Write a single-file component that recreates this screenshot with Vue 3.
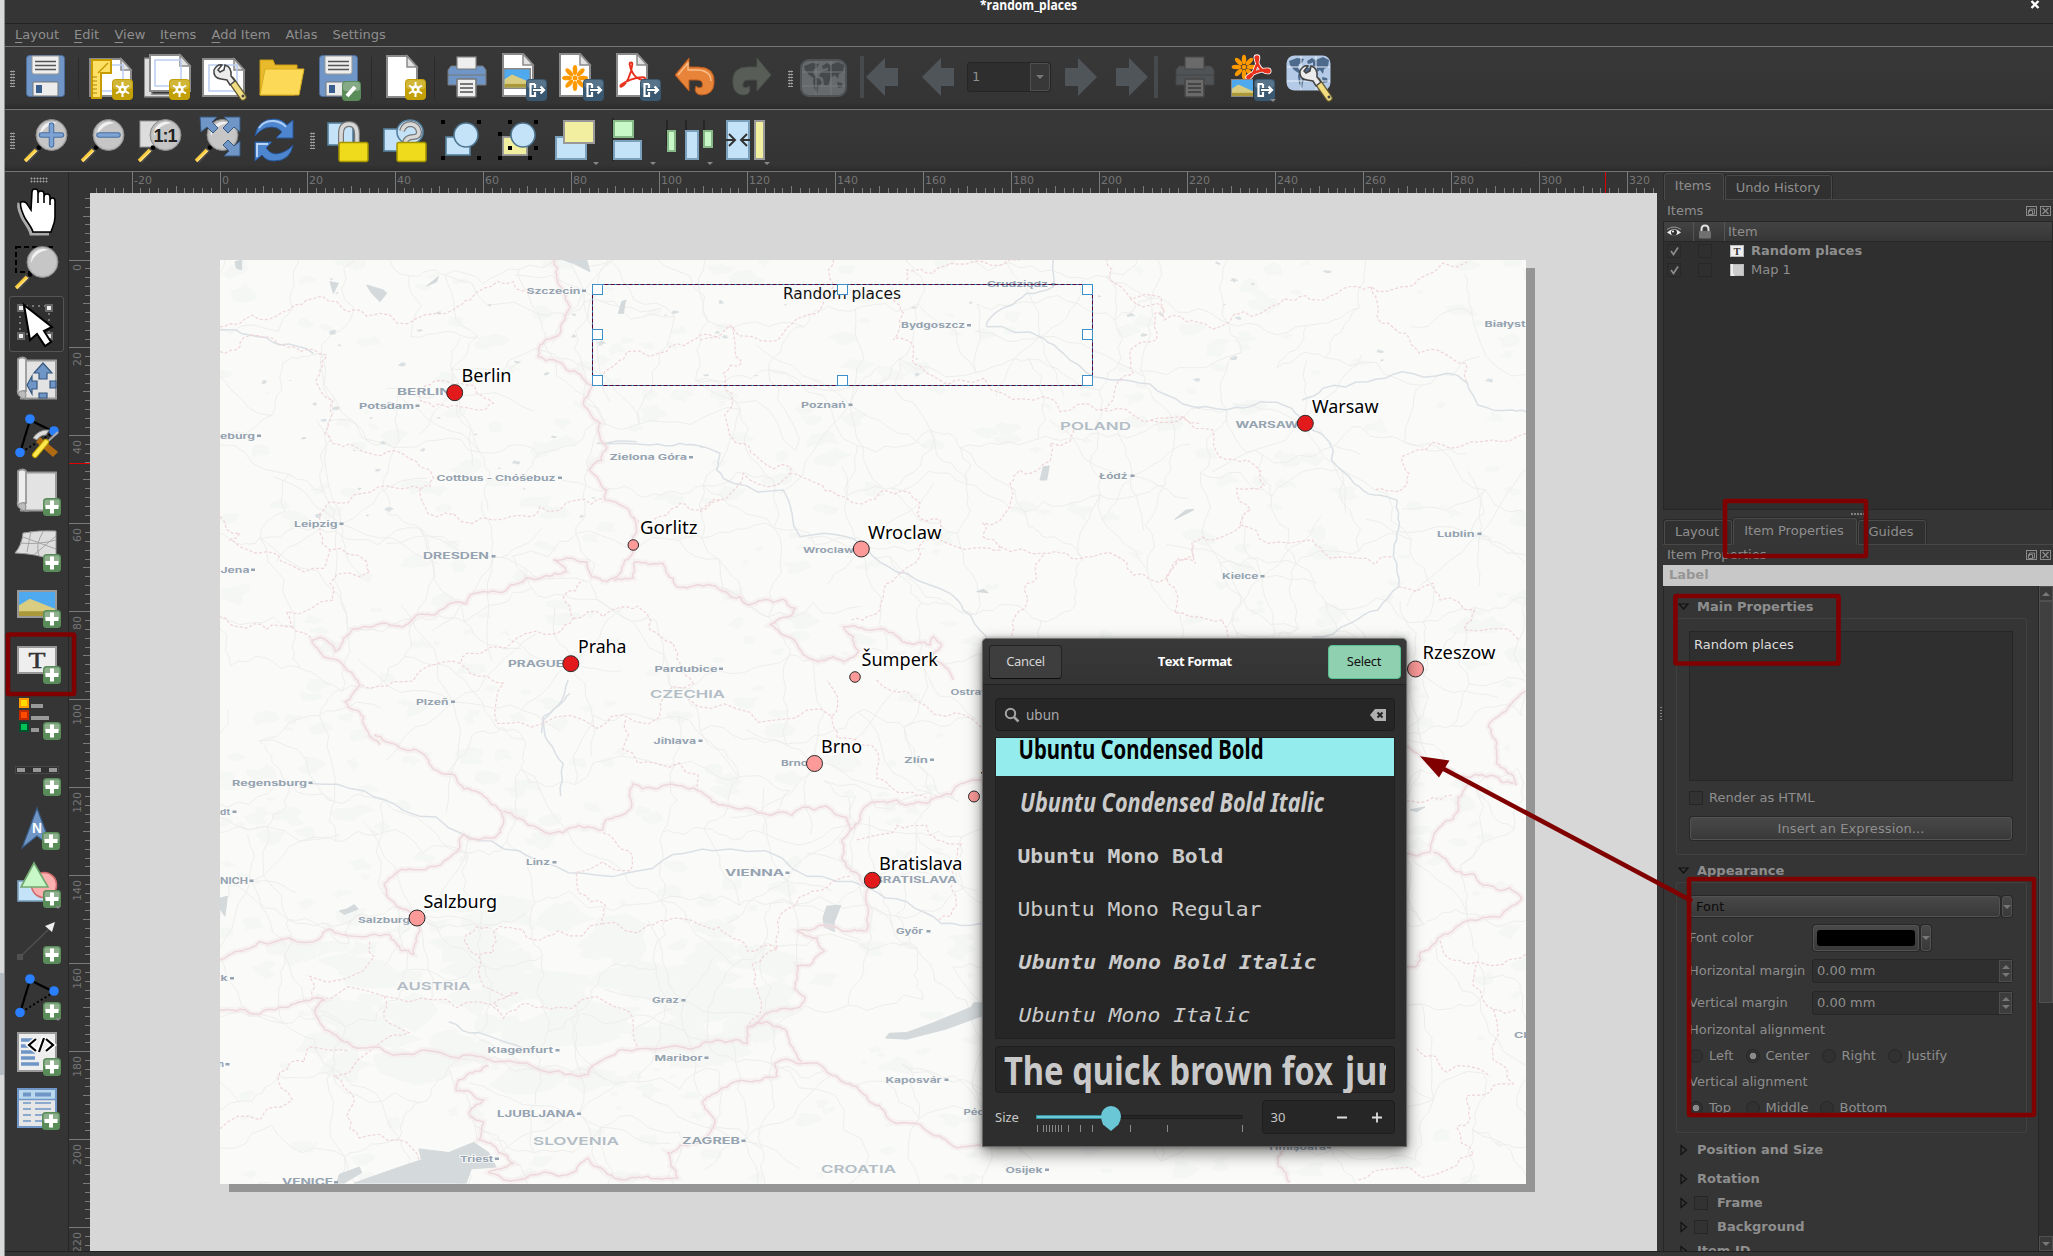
<script setup>
/* ---------- toolbar artwork ---------- */
const gold = (x, y) => `<g transform="translate(${x} ${y})"><rect width="21" height="21" rx="4" fill="#c2a006"/><rect x="1" y="1" width="19" height="9" rx="3" fill="#d2b637"/><path d="M10.500 3v15M4 6.500l13 8M17 6.500l-13 8" stroke="#fff" stroke-width="2"/><circle cx="10.500" cy="10.500" r="4" fill="#fff"/><circle cx="10.500" cy="10.500" r="1.500" fill="#c2a006"/></g>`
const plus = (x, y) => `<g transform="translate(${x} ${y})"><rect width="18" height="18" rx="3.500" fill="#5a8c5a"/><rect x="1.500" y="1.500" width="15" height="8" rx="2" fill="#8fb08f"/><path d="M9 2.500v13M2.500 9h13" stroke="#fff" stroke-width="4"/></g>`
const out = (x, y) => `<g transform="translate(${x} ${y})"><rect width="21" height="22" rx="4" fill="#3a5870"/><rect x="1" y="1" width="19" height="8" rx="3" fill="#56738a"/><path d="M9 5H4.500v12H9v-4M9 5v4M7 11h11M14.500 7.500L18 11l-3.500 3.500" fill="none" stroke="#fff" stroke-width="2.200"/></g>`
const floppy = `<rect x="4.500" y="2.500" width="38" height="41" rx="3" fill="#6f96c6" stroke="#4b6d98"/><path d="M10 3h27v16q0 2-2 2H12q-2 0-2-2z" fill="#eee" stroke="#999"/><path d="M13 8.500h21M13 12.500h21M13 16.500h21" stroke="#555" stroke-width="1.600"/><rect x="11" y="29" width="25" height="14" rx="1" fill="#ececec" stroke="#777"/><rect x="14" y="32" width="6" height="8" fill="#3a5f8d"/>`
const sheet = (x, y, w, h) => `<path d="M${x} ${y}h${w - 10}l10 11v${h - 11}h${-w}z" fill="#fff" stroke="#8a8a8a" stroke-width="2"/><path d="M${x + w - 10} ${y}v11h10z" fill="#e2e2e2" stroke="#8a8a8a" stroke-width="1.500"/>`
const mag = (inner) => `<path d="M4 45L15 33" stroke="#4a4a4a" stroke-width="6"/><path d="M3 45L14 34" stroke="#ffce3c" stroke-width="3.600"/><path d="M4 45.500L15 34.500" stroke="#fff2b8" stroke-width="1"/><circle cx="17" cy="31.500" r="2.300" fill="#000"/><circle cx="29.500" cy="19" r="15.500" fill="#b9b9b9" stroke="#8a8a8a" stroke-width="1"/><circle cx="29.500" cy="19" r="13.800" fill="#c6c6c6"/><path d="M18 20A12 13 0 0 1 35 7Q22 9 18 20z" fill="#f1f1f1"/>${inner}`
const wrench = `<path d="M30 27l12 17" stroke="#5c532c" stroke-width="7.500" stroke-linecap="round"/><path d="M30 27l12 17" stroke="#f2dc82" stroke-width="5" stroke-linecap="round"/><path d="M21 12q-5-1-8 5-1 8 7 9l6 1 3 5 5-4-4-5q1-9-6-11l-1 5-4 2-2-2z" fill="#ececec" stroke="#444" stroke-width="1.500"/><circle cx="42" cy="43" r="1.500" fill="#444"/>`
const picture = (x, y, w, h) => `<rect x="${x}" y="${y}" width="${w}" height="${h}" fill="#4fa9ee"/><path d="M${x} ${y + h * 0.55}L${x + w * 0.3} ${y + h * 0.28}L${x + w} ${y + h * 0.7}V${y + h}H${x}z" fill="#d8cd80"/><path d="M${x} ${y + h * 0.8}h${w}v${h * 0.2}h${-w}z" fill="#ab983a"/>`
const flower = (x, y, s) => `<g transform="translate(${x} ${y}) scale(${s})" fill="#f90">${[0, 45, 90, 135, 180, 225, 270, 315].map(a => `<ellipse cx="0" cy="-8" rx="2.300" ry="5" transform="rotate(${a})"/>`).join('')}<circle r="2.500"/></g>`
const acro = (x, y, s, w) => `<path transform="translate(${x} ${y}) scale(${s})" d="M0 26c5-1 11-13 12-24 0-2-3-2-3 0 1 8 6 16 14 17 3 0 3-3 0-3-8 0-18 4-23 8-1 1-1 2 0 2z" fill="none" stroke="#e8301c" stroke-width="${w}"/>`
const printer = (a, b, c) => `<rect x="14" y="4" width="19" height="14" fill="${b}" stroke="${c}"/><path d="M8 13h32l3 4v15H5V17z" fill="${a}" stroke="${c}"/><rect x="14" y="4" width="19" height="12" fill="${b}" stroke="${c}"/><path d="M5 22h38" stroke="${c}"/><rect x="14" y="26" width="19" height="18" rx="1" fill="${b}" stroke="${c}" stroke-width="1.600"/><path d="M17 31h13M17 35h13M17 39h13" stroke="${c}" stroke-width="1.800"/>`
const lockShape = (open) => `<path d="${open ? 'M22 15q2-7 9-7 7 1 8 8 0 5-6 5t-8 5' : 'M18 28V18q0-10 8-10t8 10v10'}" fill="none" stroke="#777" stroke-width="6"/><path d="${open ? 'M22 15q2-7 9-7 7 1 8 8 0 5-6 5t-8 5' : 'M18 28V18q0-10 8-10t8 10v10'}" fill="none" stroke="#d8d8d8" stroke-width="3.600"/><rect x="${open ? 17 : 16}" y="26.500" width="29" height="19" rx="2" fill="#efdb1c" stroke="#a59300" stroke-width="1.500"/>`
const dots = (pts) => pts.map(([x, y]) => `<rect x="${x - 2}" y="${y - 2}" width="4" height="4" fill="#000"/>`).join('')
const triangle = `<path d="M17 8L7 41" stroke="#000" stroke-width="2.200"/><path d="M17 8l24 12" stroke="#000" stroke-width="2.200"/><path d="M41 20L7 41" stroke="#000" stroke-width="2" stroke-dasharray="2 2.500"/><circle cx="17" cy="7" r="4.800" fill="#2a7fff"/><circle cx="41" cy="19" r="4.800" fill="#2a7fff"/><circle cx="7" cy="40.500" r="4.800" fill="#2a7fff"/>`
const roll = `<path d="M12 4.500h31v38H8z" fill="#e3e3e3" stroke="#999" stroke-width="2"/><path d="M5 3q5-3 8 0v32q-5 0-7 4-2-1-1-6z" fill="#eee" stroke="#999" stroke-width="1.800"/><path d="M5 38q1-4 7-3 2 4 0 7l4 1q-8 1-11-5z" fill="#bbb" stroke="#8c8c8c"/>`
const globe = (bg, land, grid) => `<rect x="1.500" y="2.500" width="44" height="35" rx="8" fill="${bg}"/><g fill="${land}"><path d="M4 8l8-3 7 1-2 4-3 1-1 4 3 4-1 2-6-4-4-5z"/><path d="M14 19l6 2 2 4-4 4-1 7-3-6-1-7zM22 8l5-3 3 2-3 3-4 1zM21 14l8-2 2 7-3 9-4-1-1-7-4-2z"/><path d="M28 8l10-4 6 3-1 7-4 2-1 5-3-4-3 2-4-5zM37 24l5 1 1 4-5 1z"/></g><path d="M2 14h43M2 28h43M16 3v34M31 3v34" stroke="${grid}" stroke-width="1"/>`
const arrowL = (x) => `<path d="M${x} 24L${x + 19} 5v10h13v18h-13v10z" fill="#50555a"/>`
const arrowR = (x) => `<path d="M${x} 24L${x - 19} 5v10h-13v18h13v10z" fill="#50555a"/>`
const caret = `<path d="M42 46h6l-3 3z" fill="#888"/>`

const ic = {
  save: floppy,
  newLayout: sheet(3, 6, 41, 37) + `<path d="M10 12h26v26H10z" fill="none" stroke="#bccdf2" stroke-width="1.500"/><path d="M5 7h19v13h-10v25H5z" fill="#ffe066" stroke="#c69c00" stroke-width="2"/><path d="M11 20l10-10" stroke="#c69c00" stroke-width="1.500"/><path d="M5 24h5M5 28h5M5 32h5M5 36h5M5 40h5" stroke="#a98600"/>` + gold(25, 26),
  duplicate: `<path d="M0 5h8v36h28v3H0z" fill="#ddd" stroke="#777" stroke-width="1.500"/>` + sheet(6, 2, 40, 36) + `<path d="M11 7h26v26H11z" fill="none" stroke="#bccdf2" stroke-width="1.500"/>` + gold(25, 26),
  manager: sheet(2, 6, 41, 37) + `<path d="M8 12h28v26H8z" fill="none" stroke="#bccdf2" stroke-width="1.500"/>` + wrench,
  folder: `<path d="M2 7h13l2 5h22v8L36 42H2z" fill="#e9bb2c" stroke="#c99b12"/><path d="M2 42L7 16h39l-5 26z" fill="#fdd958" stroke="#d8ac1e"/>`,
  saveAs: floppy + `<g transform="translate(27 28)"><rect width="19" height="20" rx="4" fill="#5a8c5a"/><rect x="1" y="1" width="17" height="9" rx="3" fill="#86aa86"/><path d="M5 15l8-9" stroke="#fff" stroke-width="4"/></g>`,
  addPage: sheet(7, 3, 30, 41) + gold(25, 26),
  print: printer('#6f96c6', '#eee', '#777'),
  exImage: sheet(3, 1, 30, 42) + `<rect x="3" y="15" width="28" height="21" fill="#888"/>` + picture(4.5, 16.5, 25, 18) + out(26, 26),
  exSvg: sheet(3, 1, 30, 42) + flower(18, 25, 1) + out(26, 26),
  exPdf: sheet(3, 1, 30, 42) + acro(7, 9, 0.95, 2) + out(26, 26),
  undo: `<path d="M4 22L18 5v9h9q18 0 16 17-1 11-13 11-8-1-5-9 2 3 6 1 2-7-5-7h-8v11z" fill="#e8833a" stroke="#b9581a"/><path d="M7 22l10-12v7h10q13 1 13 11" fill="none" stroke="#f9c08d" stroke-width="1.300"/>`,
  redo: `<path d="M43 22L29 5v9h-9q-17 0-15 17 1 11 11 11 8-1 5-9-2 3-6 1-1-7 5-7h9v11z" fill="#585d57" stroke="#4a504b"/>`,
  atlas: `<g transform="translate(0 5)">${globe('#676a6c', '#45494c', '#777a7c')}</g><rect x="1" y="7" width="45" height="36" rx="8" fill="none" stroke="#505356" stroke-width="2"/>`,
  first: `<path d="M5 3v42" stroke="#464a4d" stroke-width="4"/>` + arrowL(9),
  prev: arrowL(8),
  next: arrowR(40),
  last: arrowR(34) + `<path d="M42 3v42" stroke="#464a4d" stroke-width="4"/>`,
  printOff: printer('#505356', '#6a6a6a', '#454545'),
  exAtlas: flower(16, 14, 0.95) + acro(20, 3, 0.85, 5).replace('#e8301c', '#fff') + acro(20, 3, 0.85, 3) + `<rect x="3" y="26" width="22" height="18" fill="#888"/>` + picture(4, 27, 21, 16) + out(26, 26) + caret,
  atlasSet: globe('#b4cae6', '#4d6a8c', '#e8f0fa') + `<g transform="translate(2 1)">${wrench}</g>`,
  zoomIn: mag(`<path d="M29.500 9v20M19.500 19h20" stroke="#476f9f" stroke-width="5.500" stroke-linecap="round"/><path d="M29.500 9v20M19.500 19h20" stroke="#7ca3d3" stroke-width="3.500" stroke-linecap="round"/>`),
  zoomOut: mag(`<path d="M20 19h19" stroke="#476f9f" stroke-width="5.500" stroke-linecap="round"/><path d="M20 19h19" stroke="#7ca3d3" stroke-width="3.500" stroke-linecap="round"/>`),
  zoomOne: `<rect x="4" y="5" width="26" height="26" fill="#ddd" stroke="#999"/>` + mag(`<text x="29.500" y="25.500" text-anchor="middle" font-family="Liberation Sans,sans-serif" font-weight="700" font-size="18" textLength="24" fill="#222">1:1</text>`),
  zoomFull: mag(`<g fill="#6f96c6" stroke="#37587f"><path d="M7 1h17l-5 5 6 6-5 5-6-6-6 5zM47 1H31l5 5-6 6 5 5 6-6 6 5zM47 40H31l5-5-6-6 5-5 6 6 6-5z"/></g>`),
  refresh: `<path d="M5 20Q8 3 24 3q8 0 13 6l6-5v18H26l6-6q-4-5-10-5Q12 11 5 20z" fill="#4d86cf" stroke="#27569b"/><path d="M9 12Q14 4 24 5q8 1 12 6" fill="none" stroke="#aecdf4" stroke-width="2"/><path d="M43 29q-3 16-19 16-8 0-12-6l-7 6V26h17l-6 6q4 6 10 6 10-1 17-9z" fill="#4d86cf" stroke="#27569b"/><path d="M7 41V28h11" fill="none" stroke="#b9d4f6" stroke-width="2"/>`,
  lock: `<rect x="5" y="7" width="25" height="22" fill="#c5e3f8" stroke="#56809d" stroke-width="1.600"/>` + lockShape(false),
  unlock: `<rect x="4" y="13" width="22" height="22" fill="#c5e3f8" stroke="#56809d" stroke-width="1.600"/><ellipse cx="30" cy="16" rx="13" ry="12" fill="#c5e3f8" stroke="#56809d" stroke-width="1.600"/>` + lockShape(true),
  group: `<rect x="9" y="21" width="24" height="18" fill="#c5e3f8" stroke="#56809d" stroke-width="1.600"/><circle cx="29" cy="19" r="12" fill="#c5e3f8" stroke="#4e7590" stroke-width="1.600"/>` + dots([[6, 6], [42, 6], [6, 42], [42, 42]]),
  ungroup: `<rect x="9" y="21" width="24" height="18" fill="#f3efa0" stroke="#999" stroke-width="1.800"/><circle cx="29" cy="19" r="12" fill="#c5e3f8" stroke="#4e7590" stroke-width="1.600"/>` + dots([[16, 6], [42, 6], [6, 18], [16, 32], [42, 32], [6, 42], [36, 42]]),
  raise: `<rect x="5" y="21" width="30" height="22" fill="#c5e3f8" stroke="#7ba0bb" stroke-width="2"/><rect x="13" y="5" width="30" height="22" fill="#f3efa0" stroke="#999" stroke-width="2"/>` + caret,
  align: `<path d="M5 2v43" stroke="#222" stroke-width="1.500"/><rect x="6" y="5" width="19" height="16" fill="#c8f8c8" stroke="#87b887" stroke-width="2"/><rect x="6" y="25" width="27" height="18" fill="#c5e3f8" stroke="#7ba0bb" stroke-width="2"/>` + caret,
  distribute: `<path d="M2 4v26M21 4v18M39 4v18" stroke="#222" stroke-width="1.500"/><rect x="3" y="15" width="7" height="20" fill="#c8f8c8" stroke="#87b887" stroke-width="2"/><rect x="21" y="15" width="12" height="28" fill="#c5e3f8" stroke="#7ba0bb" stroke-width="2"/><rect x="39" y="15" width="8" height="16" fill="#c8f8c8" stroke="#87b887" stroke-width="2"/>` + caret,
  resize: `<rect x="5" y="5" width="22" height="38" fill="#c5e3f8" stroke="#7ba0bb" stroke-width="2"/><path d="M4 24h8M7 18l6 6-6 6M28 24h-8M25 18l-6 6 6 6" fill="none" stroke="#333" stroke-width="2"/><rect x="33" y="5" width="9" height="38" fill="#f3efa0" stroke="#999" stroke-width="2"/>` + caret,
  hand: `<path d="M6 15c-2 3 1 9 3 14s8 11 9 17h18" fill="none" stroke="#aaa" stroke-width="3"/><path d="M8 14c-2 3 1 9 3 14s8 11 9 16h18c1-4 4-8 4-15V13c0-4-5-4-5 0v4V9c0-4-6-4-6 0v6V6c0-4-6-4-6 0v9V4c0-4-6-4-6 0l-1 18c-3-4-5-10-10-8z" fill="#fff" stroke="#000" stroke-width="1.600"/>`,
  zoom: `<rect x="3" y="3" width="36" height="25" fill="none" stroke="#000" stroke-width="2" stroke-dasharray="5 3"/><g transform="translate(0 -1)">${mag('')}</g>`,
  select: `<rect x="7" y="6" width="29" height="28" fill="none" stroke="#777" stroke-width="2" stroke-dasharray="2 4"/><g fill="#eee" stroke="#666" stroke-width="2"><rect x="5" y="5" width="6" height="6"/><rect x="33" y="5" width="6" height="6"/><rect x="5" y="33" width="6" height="6"/><rect x="33" y="33" width="6" height="6"/></g><path d="M11 5l6 35 7-6 8 12 6-4-7-11 8-4z" fill="#fff" stroke="#000" stroke-width="2"/>`,
  move: roll + `<g fill="#6f96c6" stroke="#37587f" stroke-width="1.200"><path d="M30 7l9 10h-5v6h-8v-6h-5zM14 29l5-9v5h5v8h-5v5zM43 25h-6v7h6zM26 42v-5h8v5z"/></g>`,
  editNodes: triangle + `<path d="M27 25l18 15-5 5-17-15z" fill="#b06b12"/><path d="M20 26q6-9 16-8l-3 5q-6 0-9 5z" fill="#ddd" stroke="#888"/><path d="M45 20L31 33" stroke="#aaa" stroke-width="2"/><path d="M33 30L22 43" stroke="#bfa300" stroke-width="6" stroke-linecap="round"/><path d="M33 30L22 43" stroke="#fde84e" stroke-width="4" stroke-linecap="round"/>`,
  addMap: roll + plus(30, 30),
  add3d: `<path d="M10 9q16-3 33-2v24q-5-2-8 4-10-5-33-6 7-8 8-20z" fill="#dedede" stroke="#999"/><path d="M7 19q18 2 36-3M18 7l-4 21M30 8q-8 12-4 24M10 13l33 12M43 12L22 30" fill="none" stroke="#a5a5a5"/>` + plus(30, 30),
  addPicture: `<rect x="4" y="10" width="40" height="28" fill="#999"/>` + picture(6, 12, 36, 24) + plus(30, 30),
  addLabel: `<rect x="5" y="11" width="38" height="26" fill="#eee" stroke="#999" stroke-width="2"/><text x="24" y="31.500" text-anchor="middle" font-family="Liberation Serif,serif" font-size="23" textLength="17" lengthAdjust="spacingAndGlyphs" fill="#333" stroke="#333" stroke-width=".5">T</text>` + plus(30, 30),
  addLegend: `<rect x="7" y="7" width="8" height="8" fill="#ffdc00" stroke="#ff9c00" stroke-width="2"/><rect x="7" y="19" width="8" height="8" fill="#ff4b00" stroke="#c22b00" stroke-width="2"/><rect x="7" y="31" width="8" height="8" fill="#00c255" stroke="#00522e" stroke-width="2"/><path d="M18 14h12M18 26h18M18 38h8" stroke="#999" stroke-width="4"/>` + plus(30, 30),
  addScale: `<rect x="2.500" y="18.500" width="43" height="7" fill="#303030" stroke="#474747"/><path d="M4 22h8M20 22h8M36 22h8" stroke="#999" stroke-width="4"/>` + plus(30, 30),
  addNorth: `<path d="M24 4L9 44l15-12 15 12z" fill="#6f96c6" stroke="#37587f" stroke-width="1.200"/><text x="24" y="29" text-anchor="middle" font-family="Liberation Sans,sans-serif" font-weight="700" font-size="15" textLength="10" lengthAdjust="spacingAndGlyphs" fill="#fff">N</text>` + plus(29, 28),
  addShape: `<rect x="5" y="21" width="36" height="20" fill="#c5e3f8" stroke="#7ba0bb" stroke-width="1.600"/><circle cx="31" cy="25" r="12.500" fill="#fbb0b0" stroke="#d16c6c" stroke-width="1.600"/><path d="M21 3L8 27h27z" fill="#c8f8c8" stroke="#70a870" stroke-width="1.600"/>` + plus(30, 30) + caret,
  addArrow: `<path d="M7 41L37 12" stroke="#505050" stroke-width="1.500"/><rect x="4" y="38" width="6" height="6" fill="#505050"/><path d="M42 6l-3 10-7-6z" fill="#eee"/>` + plus(30, 30),
  addNode: triangle + plus(30, 30) + caret,
  addHtml: `<rect x="5" y="5" width="38" height="38" fill="#eee" stroke="#999" stroke-width="2"/><path d="M8 12h12M8 18h9M8 24h14M8 30h14M8 36h18" stroke="#6f96c6" stroke-width="3.500"/><path d="M23 11l-7 6 7 6M33 11l7 6-7 6M31 9l-6 15" fill="none" stroke="#fff" stroke-width="5"/><path d="M23 11l-7 6 7 6M33 11l7 6-7 6M31 10l-5 14" fill="none" stroke="#000" stroke-width="2.200"/>` + plus(30, 30),
  addTable: `<rect x="5" y="5" width="38" height="38" fill="#e6e6e6" stroke="#6f96c6" stroke-width="2"/><rect x="6" y="6" width="36" height="9" fill="#b9d8ee"/><path d="M5 15.500h38" stroke="#6f96c6" stroke-width="1.500"/><path d="M10 10.500h8M22 10.500h16" stroke="#6f96c6" stroke-width="4"/><path d="M10 19h8M22 19h16M10 25h8M22 25h16M10 31h8M22 31h16M10 37h8M22 37h8" stroke="#6f96c6" stroke-width="1.600"/>` + plus(29, 28),
}
const menus = [['L', 'ayout', 59], ['E', 'dit', 40.5], ['V', 'iew', 45.5], ['I', 'tems', 51.5], ['A', 'dd Item', 74], ['', 'Atlas', 47], ['', 'Settings', 60]]
const bar1 = ['save', '|', 'newLayout', 'duplicate', 'manager', 'folder', 'saveAs', '|', 'addPage', '|', 'print', 'exImage', 'exSvg', 'exPdf', 'undo', 'redo']
const bar1b = ['next', 'last', 'printOff', 'exAtlas', 'atlasSet']
const bar2 = ['zoomIn', 'zoomOut', 'zoomOne', 'zoomFull', 'refresh']
const bar2b = ['lock', 'unlock', 'group', 'ungroup', 'raise', 'align', 'distribute', 'resize']
const tools = ['hand', 'zoom', 'select', 'move', 'editNodes', 'addMap', 'add3d', 'addPicture', 'addLabel', 'addLegend', 'addScale', 'addNorth', 'addShape', 'addArrow', 'addNode', 'addHtml', 'addTable']

/* ---------- rulers: 4.398 px per millimetre ---------- */
const mmTicks = (from, to, origin) => {
  const list = []
  for (let mm = from; mm <= to; mm += 2) list.push({ mm, p: Math.floor(origin + mm * 4.398) + 0.5, len: mm % 20 === 0 ? 21 : mm % 10 === 0 ? 7 : 5 })
  return list
}
const hTicks = mmTicks(-28, 326, 220)
const vTicks = mmTicks(-14, 224, 260)

/* ---------- base map ---------- */
let seed = 4711
const rnd = () => (seed = (seed * 16807) % 2147483647) / 2147483647
const rough = (pts, amp, depth) => {
  let cur = pts
  for (let d = 0; d < depth; d++) {
    const nxt = [cur[0]]
    for (let i = 1; i < cur.length; i++) {
      const [ax, ay] = cur[i - 1], [bx, by] = cur[i]
      const k = (rnd() - 0.5) * amp * 2
      nxt.push([(ax + bx) / 2 - (by - ay) * k, (ay + by) / 2 + (bx - ax) * k], cur[i])
    }
    cur = nxt
  }
  return 'M' + cur.map(p => p[0].toFixed(1) + ' ' + p[1].toFixed(1)).join('L')
}
/* digitised line work; each sheet has its own origin and scale */
const sheets = {
  a: [220, 250, 3, 3], b: [700, 250, 3, 3], c: [1130, 170, 2.904, 3], d: [210, 680, 2.01, 2.751], e: [1160, 640, 3, 2.545],
}
const parse = (s, str) => {
  const [ox, oy, kx, ky] = sheets[s]
  return str.split(' ').map(p => { const [x, y] = p.split(',').map(Number); return [ox + x / kx, oy + y / ky] })
}
const borders = [
  ['a', '1000,30 1010,80 1030,130 1050,170 1035,210 1020,250 960,285 955,320 1040,360 1115,405 1090,460 1140,520 1140,560 1160,590 1145,630 1108,660 1160,720 1155,750 1230,785 1250,840 1240,900 1200,970 1160,995 1115,980 1100,935 1050,925 1000,930 1040,965 970,980 870,1005 860,1020 750,1035 740,1060 710,1055 650,1090 580,1105 550,1130 500,1120 420,1135 370,1165 345,1205 310,1165 275,1170 310,1220 380,1260 420,1305 375,1355 430,1400 440,1440 480,1485'],
  ['a', '1180,990 1240,985 1245,935 1330,940 1340,970 1370,1010 1430,1005 1500,1020'],
  ['b', '60,1020 90,1040 120,1040 145,1065 190,1050 250,1048 285,1075 265,1100 210,1125 250,1155 290,1180 330,1225 355,1235 400,1220 430,1235 475,1200 460,1160 430,1130 500,1140 600,1165 620,1180 690,1185 700,1160 725,1185 715,1200 690,1230 760,1290'],
  ['d', '330,150 380,185 410,190 440,230 490,260 510,300 550,320 585,360 590,395 570,435 510,425 500,465 480,490 400,520 350,560 355,590 400,635 415,660 415,720 410,755 385,745 360,700 290,705 240,685 220,712 100,720 60,745 20,770'],
  ['d', '590,360 640,400 710,420 740,400 790,412 795,385 845,355 850,285 890,298 940,290 1000,320 1050,350 1120,370 1170,372 1190,350 1280,378 1290,410 1310,360 1340,335 1380,330 1400,345 1440,340 1490,315 1510,285 1560,280'],
  ['d', '1290,410 1270,440 1270,490 1300,530 1325,570 1320,690 1270,690 1180,690 1220,710 1235,745 1210,780 1180,785 1175,850 1195,870 1185,900 1140,910 1080,955 1080,1000 1020,990 980,1010 860,1015 820,1020 760,1085 700,1075 570,1050 500,1040 350,1020 280,1000 245,970 210,910 230,880 180,885 140,900 60,905 20,908'],
  ['d', '560,1060 545,1075 500,1100 495,1130 550,1155 520,1190 550,1215 540,1265 580,1300 610,1330 560,1355 590,1375 700,1365 760,1315 800,1360 830,1375 880,1365 940,1370 920,1300 945,1280 1000,1255 1015,1215 990,1165 1010,1140 1090,1105 1140,1090 1135,1055 1165,1045 1190,1055 1260,1090 1310,1135 1345,1170 1380,1220 1440,1240 1490,1278 1550,1280'],
  ['d', '1080,955 1120,940 1155,960 1165,1000 1190,1050'],
  ['e', '1097,130 1050,165 985,220 1010,260 1010,315 1060,345 1070,370'],
  ['e', '740,270 800,310 860,325 930,350 1000,345 1060,365'],
  ['e', '740,545 810,540 820,500 880,455 895,400 930,365'],
  ['e', '820,540 870,575 900,590 940,595 970,625 1050,630 1085,660 1050,680 1020,705 920,715 870,745 830,765 780,795 770,830 740,830'],
  ['e', '365,1290 355,1340 390,1380'],
].map(([s, p]) => rough(parse(s, p), 0.16, 3))
const regions = [
  ['a', '0,230 60,220 95,195 190,185 260,150 350,155 400,180 480,190 590,205 700,180 750,150 790,115 880,95 900,120 980,130'],
  ['a', '0,305 60,290 80,260 130,262 190,285 240,305 320,315 300,360 290,400 340,450 330,510 315,550 370,590 430,605 500,605 590,635 630,660 630,710 600,715 520,712 430,730 330,755 300,790 300,850 330,900 440,935 450,965 330,1000 340,1050 200,1085 215,1130 140,1138 60,1130 0,1100'],
  ['a', '0,800 60,850 30,870 70,895 140,905 200,940 310,955 330,900'],
  ['a', '215,1130 275,1165'],
  ['a', '600,420 640,395 720,400 790,440 820,460 790,480 700,465 640,470 600,450 600,420'],
  ['a', '600,715 650,800 700,790 820,810 930,800 960,770 1070,750 1155,745'],
  ['a', '425,1305 520,1295 620,1250 720,1240 740,1210 890,1165 1010,1150 1060,1105 1030,1040 1090,990'],
  ['a', '1060,1105 1150,1100 1220,1070 1280,1090 1290,1140 1360,1180 1380,1240 1420,1300 1320,1360 1320,1400 1170,1400 1130,1435 970,1420 830,1420 850,1300 750,1270 720,1240'],
  ['a', '1240,800 1340,795 1380,760 1440,780 1500,750'],
  ['a', '1140,400 1190,340 1220,305 1290,320 1350,290 1430,265 1500,265'],
  ['b', '0,270 50,260 90,225 160,260 250,250 310,200 360,180 400,110 385,60 400,30'],
  ['b', '100,230 105,290 125,340 70,370 95,430 90,560 130,580 180,630 270,650 270,670 350,700 410,735 510,750 550,720 620,725 660,760 650,790 720,810 720,865 660,885 660,920 590,980 550,1040 540,1080 490,1110 450,1110'],
  ['b', '0,785 80,745 130,670 230,705 270,670'],
  ['b', '580,150 610,190 580,270 640,285 640,340 720,390 780,390 910,430 1030,440 1080,485 1190,480 1240,450 1270,380 1300,370 1290,300 1370,270 1365,190 1390,180 1380,140 1230,90 1220,30'],
  ['b', '1120,540 1110,575 1050,580 1055,620 1020,655 960,660 930,700 930,770 850,820 850,860 890,880 900,900 870,895 720,870'],
  ['b', '900,890 1030,910 1100,910 1180,920 1270,930 1300,975 1400,985 1420,940 1480,920 1480,880'],
  ['b', '1030,915 1010,980 975,1010 980,1060 940,1110 935,1160'],
  ['b', '620,90 620,60 700,70 750,40 850,35 960,30'],
  ['b', '1200,480 1300,495 1370,515 1450,500 1500,520'],
  ['c', '0,385 80,400 100,450 150,440 190,455 290,455 330,425 420,405 480,390 540,390 620,355 700,350 790,350 850,320 980,275'],
  ['c', '700,350 720,410 730,460 800,490 840,550 910,550 975,580 980,640'],
  ['c', '60,750 150,740 240,780 260,860 340,870 380,905 390,945 310,955 350,1020 320,1070 240,1110 180,1115 190,1180 140,1165 110,1240 130,1330 180,1340 270,1350 285,1400'],
  ['c', '320,1065 400,1120 530,1110 560,1145 660,1165 760,1160'],
  ['c', '1150,790 1050,810 930,835 830,840 790,860 810,910 780,965 710,960'],
  ['c', '780,1250 880,1240 900,1290 1000,1320 970,1380 1130,1410'],
  ['d', '835,110 830,190 900,230 980,260 980,305'],
  ['d', '960,50 1060,80 1150,108 1250,100 1255,30 1240,0'],
  ['d', '1250,100 1260,160 1330,180 1340,270 1400,310 1440,325'],
  ['d', '1340,0 1400,30 1480,100 1550,130'],
  ['d', '790,420 840,470 845,525 735,530 740,585 795,620 790,670 880,675 930,655 1000,680 1040,700 1080,745 1140,740 1150,640 1200,590 1240,570 1290,540'],
  ['d', '790,670 700,690 650,715 600,680 570,690 570,750 520,740 515,700 560,680'],
  ['d', '540,760 540,810 620,860 570,890 590,930 640,890 700,900 800,890 850,930 860,1010'],
  ['d', '320,720 330,760 200,815 205,875 350,870 450,880 540,885 580,910'],
  ['d', '350,870 350,930 400,970 340,1000 250,1090 290,1150 275,1200 300,1260 380,1265 420,1320'],
  ['d', '20,1235 100,1210 115,1180 165,1155 140,1080 190,1050 200,1010 280,1020'],
  ['d', '1140,740 1090,780 1100,850 1105,920 1080,955'],
  ['d', '1300,440 1370,420 1380,400 1440,400 1460,440 1510,450 1490,520 1500,620 1465,660'],
  ['e', '1097,800 1030,825 950,820 940,880 1000,940 1070,940'],
  ['e', '840,765 880,815 950,820'],
  ['e', '1000,940 1000,1070 1060,1130 990,1150 920,1160 930,1220 890,1240 940,1310 870,1345 700,1345 590,1375'],
  ['e', '770,1040 830,1060 860,1100 990,1110'],
  ['e', '740,410 800,410 880,395'],
].map(([s, p]) => rough(parse(s, p), 0.22, 2))
const rivers = [
  ['b', '860,230 870,205 920,170 980,130 1060,110 1060,30'],
  ['b', '860,230 1030,265 1090,310 1180,380 1290,392 1400,435 1500,475'],
  ['c', '190,713 310,712 380,695 470,715 510,770 560,795 590,840 585,870 650,940 710,975 775,990 780,1030 775,1090 765,1160 780,1250 720,1320 640,1360 530,1400'],
  ['c', '500,690 560,655 690,635 790,605 920,610 980,640 1010,705 1110,720 1150,725'],
  ['a', '0,240 90,255 180,285 280,310'],
  ['a', '965,1450 970,1400 1010,1370 1050,1330'],
  ['d', '720,0 700,70 670,110 680,170 710,230 705,320'],
  ['d', '200,285 310,305 390,360 510,425 620,470 720,530 840,530 930,480 1010,470 1150,490 1200,540 1320,570 1400,610 1470,670 1550,670'],
  ['d', '480,940 540,970 640,1020'],
  ['a', '1250,575 1130,580 1290,585 1380,580 1450,590'],
  ['b', '0,590 60,610 50,660 100,700 250,720 300,860 440,860 520,920 620,970 750,1030 790,1080 860,1160'],
].map(([s, p]) => rough(parse(s, p), 0.12, 2))
const water = [
  ['d', '290,1384 370,1345 425,1320 420,1290 480,1300 530,1272 560,1300 575,1340 525,1345 515,1384'],
  ['d', '1358,985 1365,972 1400,970 1450,945 1530,900 1535,888 1560,888 1560,920 1480,960 1400,988'],
  ['d', '1240,622 1268,620 1255,665 1255,692 1235,680 1232,655'],
  ['d', '260,635 275,630 290,618 298,630 270,645'],
  ['d', '255,1384 260,1360 300,1340 305,1355 270,1384'],
  ['d', '20,600 35,595 30,650 20,630'],
  ['a', '440,105 490,120 500,130 480,155 455,130'],
  ['a', '330,95 355,100 340,130'],
  ['a', '1030,30 1100,30 1110,65 1060,40'],
  ['a', '1195,190 1205,155 1217,150 1210,190'],
  ['a', '45,35 65,30 65,60 50,55'],
  ['a', '620,108 655,80 650,95'],
  ['b', '1020,690 1030,650 1048,648 1040,690'],
  ['b', '830,1025 850,1018 865,1028'],
  ['b', '1430,805 1460,780 1480,780'],
  ['c', '130,1048 160,1022 185,1018'],
  ['e', '750,432 795,425 770,437'],
].map(([s, p]) => parse(s, p).map(q => q.join()).join(' '))

const hubs = [[455, 393], [571, 664], [861, 549], [1305, 423], [873, 880], [815, 763], [417, 918], [787, 880], [684, 1001], [744, 1141], [493, 557], [341, 524], [1132, 476], [850, 405], [1415, 669], [1262, 577], [1480, 534], [579, 1114], [584, 291], [1040, 337], [453, 702], [251, 881]]
const grid = []
for (let r = 0; r < 17; r++) { grid.push([]); for (let c = 0; c < 22; c++) grid[r].push([215 + c * 63 + (rnd() - 0.5) * 48, 255 + r * 59 + (rnd() - 0.5) * 46]) }
const roads = []
for (let r = 0; r < 17; r++) for (let c = 0; c < 22; c++) {
  if (c < 21 && rnd() < 0.72) roads.push(rough([grid[r][c], grid[r][c + 1]], 0.2, 3))
  if (r < 16 && rnd() < 0.68) roads.push(rough([grid[r][c], grid[r + 1][c]], 0.2, 3))
  if (r < 16 && c < 21 && rnd() < 0.25) roads.push(rough([grid[r][c], grid[r + 1][c + 1]], 0.18, 3))
}
for (const [x, y] of hubs) for (let k = 0; k < 6; k++) {
  const t = k * 1.05 + rnd() * 0.6, l = 45 + rnd() * 70
  roads.push(rough([[x, y], [x + Math.cos(t) * l, y + Math.sin(t) * l]], 0.13, 3))
}
const blob = (x, y, r) => {
  const p = []
  for (let k = 0; k < 9; k++) { const q = r * (0.4 + rnd() * 0.8), t = k * 0.698; p.push((x + Math.cos(t) * q * 1.5).toFixed(1) + ',' + (y + Math.sin(t) * q * 0.8).toFixed(1)) }
  return p.join(' ')
}
const woods = []
for (let k = 0; k < 620; k++) woods.push(blob(220 + rnd() * 1306, 260 + rnd() * 924, 3 + rnd() * 9))
for (let k = 0; k < 70; k++) woods.push(blob(300 + rnd() * 480, 900 + rnd() * 180, 8 + rnd() * 22))
const ponds = []
for (let k = 0; k < 45; k++) ponds.push(blob(220 + rnd() * 1306, 262 + rnd() * 120, 1 + rnd() * 2.2))
for (let k = 0; k < 22; k++) ponds.push(blob(300 + rnd() * 300, 400 + rnd() * 120, 1 + rnd() * 2))

/* text, x, centre y, width, town dot x (0 = none), font size */
const places = [
  ['Szczecin', 526.5, 291, 54, 584, 8], ['BERLIN', 397, 392.5, 54, 0, 8.5], ['Potsdam', 359, 406, 55, 417.5, 8], ['eburg', 220, 436, 35, 259, 8], ['Zielona Góra', 609.5, 457.5, 77.500, 691, 8], ['Cottbus - Chóśebuz', 436.500, 478, 119, 560, 8], ['Leipzig', 294, 524, 43.500, 341.500, 8], ['DRESDEN', 423, 556.500, 66, 493.500, 8.500], ['Jena', 220.500, 570, 29, 253, 8], ['PRAGUE', 508, 664, 56, 0, 8.500], ['Plzeň', 416, 702, 32.500, 453, 8], ['Pardubice', 654.500, 669, 63, 721, 8], ['CZECHIA', 650, 694.500, 75, 0, 11], ['Jihlava', 653.500, 741, 42.500, 700.500, 8],
  ['Grudziądz', 987, 284.500, 61, 1053.500, 8], ['Bydgoszcz', 901, 325.500, 64, 969, 8], ['Poznań', 801, 405, 45, 850.500, 8], ['POLAND', 1060, 426.500, 71, 0, 11], ['Łódź', 1099, 476, 28.500, 1132.500, 8], ['Wroclaw', 803, 550, 51, 0, 8], ['Białyst', 1484.500, 324.500, 41, 0, 8], ['WARSAW', 1235.500, 425, 63, 0, 8.500], ['Lublin', 1437, 534, 37.500, 1479.500, 8], ['Kielce', 1222, 576.500, 36.500, 1262.500, 8],
  ['Ostrava', 950.500, 692.500, 44, 0, 8], ['Brno', 781, 763.500, 27, 0, 8], ['Zlín', 904, 760, 24, 932, 8], ['Regensburg', 232, 783, 75, 310.500, 8], ['dt', 220, 812, 10, 234.500, 8], ['Linz', 526, 862.500, 24, 554.500, 8], ['VIENNA', 725, 873, 59, 787.500, 8.500], ['BRATISLAVA', 874, 880.500, 83, 0, 8.500], ['NICH', 220, 881, 28, 251.500, 8.500], ['Salzburg', 358, 920, 52, 0, 8], ['Győr', 896, 931.500, 27, 928.500, 8], ['k', 220.500, 978.500, 7, 232, 8], ['AUSTRIA', 396.500, 986.500, 74, 0, 11], ['Graz', 652, 1000.500, 27, 683.500, 8], ['Klagenfurt', 487.500, 1050.500, 65.500, 557.500, 8], ['Maribor', 654.500, 1058, 48, 706.500, 8], ['Kaposvár', 885.500, 1080, 56, 946.500, 8], ['LJUBLJANA', 497, 1114, 78.500, 579, 8.500], ['SLOVENIA', 533, 1141, 86, 0, 11], ['ZAGREB', 682, 1141, 58, 743.500, 8.500], ['CROATIA', 821, 1169, 75, 0, 11], ['Triest', 460, 1159, 33, 497, 8], ['VENICE', 282, 1182.500, 51, 336, 8.500], ['Pécs', 963.500, 1112, 27, 0, 8], ['n', 218, 1064.500, 6, 227.500, 8], ['Cluj', 1514, 1035, 24, 0, 8], ['Timişoara', 1267, 1147.500, 59, 1329, 8], ['Osijek', 1005.500, 1170, 37, 1047, 8],
]
/* name, label x, baseline, width, dot x, dot y, radius, capital */
const cities = [
  ['Berlin', 461.500, 382.300, 50, 454.700, 392.700, 8, 1], ['Gorlitz', 640, 534.300, 57.500, 633.300, 545, 5.300, 0], ['Praha', 578, 653, 48.500, 570.800, 663.700, 8, 1], ['Wroclaw', 868, 538.500, 73.500, 861.300, 549, 8, 0], ['Šumperk', 861.500, 666, 76.500, 855, 677, 5.300, 0], ['Warsaw', 1312, 412.500, 66.500, 1305.300, 423.300, 8, 1], ['Rzeszow', 1422.500, 658.500, 73, 1415.500, 669, 8, 0], ['Brno', 821, 753, 41, 814.500, 763.500, 8, 0], ['Bratislava', 879, 869.500, 83.500, 872.300, 880.300, 8, 1], ['Salzburg', 423.500, 908, 73.500, 417, 918, 8, 0], ['Trencin', 981, 785, 62, 974, 796.500, 5.500, 0],
]
const handles = [[592.5, 284.5], [837.5, 284.5], [1082.5, 284.5], [592.5, 329.5], [1082.5, 329.5], [592.5, 375.5], [837.5, 375.5], [1082.5, 375.5]]

/* ---------- font dialog ---------- */
const fonts = [
  { t: 'Ubuntu Condensed Bold', w: 245, cls: 'cond sel', x: 22.5, y: 36 },
  { t: 'Ubuntu Condensed Bold Italic', w: 304, cls: 'cond it', x: 24, y: 36 },
  { t: 'Ubuntu Mono Bold', w: 206, cls: 'mono b', x: 21.5, y: 34 },
  { t: 'Ubuntu Mono Regular', w: 244, cls: 'mono', x: 21.5, y: 34 },
  { t: 'Ubuntu Mono Bold Italic', w: 298, cls: 'mono b it', x: 22.5, y: 34 },
  { t: 'Ubuntu Mono Italic', w: 232, cls: 'mono it', x: 22.5, y: 34 },
]
const sizeTicks = [1.5, 7.5, 10.5, 13.500, 16.500, 19.500, 22.500, 25.500, 32.500, 44.500, 56.500, 94.500, 131.500, 206.500]
</script>

<template>
  <div class="desk">
    <div class="edge"><i></i></div>
    <div class="win">
      <header class="title"><svg width="98" height="18"><text x="0" y="10" textLength="97" lengthAdjust="spacingAndGlyphs">*random_places</text></svg><svg class="x" width="10" height="10"><path d="M1.500 1l7 7M8.500 1l-7 7" stroke="#fff" stroke-width="2.400" /></svg></header>
      <nav class="menu"><span v-for="m in menus" :key="m[1]" :style="{ width: m[2] + 'px' }"><u>{{ m[0] }}</u>{{ m[1] }}</span></nav>
      <div class="bar first">
        <i class="grip"></i>
        <template v-for="(n, i) in bar1" :key="i"><i v-if="n === '|'" class="sep"></i><b v-else class="cell"><svg width="48" height="50" viewBox="0 0 48 50" v-html="ic[n]"></svg></b></template>
        <i class="grip mid"></i>
        <b v-for="n in ['atlas', 'first', 'prev']" :key="n" class="cell"><svg width="48" height="50" viewBox="0 0 48 50" v-html="ic[n]"></svg></b>
        <div class="combo"><span>1</span><em></em></div>
        <b v-for="n in bar1b" :key="n" class="cell"><svg width="48" height="50" viewBox="0 0 48 50" v-html="ic[n]"></svg></b>
      </div>
      <div class="bar second">
        <i class="grip"></i>
        <b v-for="n in bar2" :key="n" class="cell"><svg width="48" height="50" viewBox="0 0 48 50" v-html="ic[n]"></svg></b>
        <i class="grip mid"></i>
        <b v-for="n in bar2b" :key="n" class="cell"><svg width="48" height="50" viewBox="0 0 48 50" v-html="ic[n]"></svg></b>
      </div>

      <div class="body">
        <aside class="tools">
          <i class="grip flat"></i>
          <b v-for="n in tools" :key="n" :class="{ on: n === 'select' }"><svg width="48" height="50" viewBox="0 0 48 50" v-html="ic[n]"></svg></b>
        </aside>

        <main class="view">
          <svg class="ruler" width="1588" height="21" viewBox="69 172 1588 21">
            <g v-for="t in hTicks" :key="t.mm"><path v-if="t.p > 90" :d="`M${t.p} ${193 - t.len}V193`" /><text v-if="t.mm % 20 === 0" :x="t.p + 1.5" y="184">{{ t.mm }}</text></g>
            <path class="red" d="M1605.500 172v21" />
          </svg>
          <div class="work">
            <svg class="ruler" width="21" height="1058" viewBox="69 193 21 1058">
              <g v-for="t in vTicks" :key="t.mm"><path :d="`M${90 - t.len} ${t.p}H90`" /><text v-if="t.mm % 20 === 0" :transform="`translate(81 ${t.p + (t.mm === 0 ? 10.500 : t.mm < 100 ? 18.500 : 25.500)}) rotate(-90)`">{{ t.mm }}</text></g>
              <path class="red" d="M69 463.500h21" />
            </svg>
            <div class="canvas">
              <div class="page">
                <svg width="1306" height="924" viewBox="220 260 1306 924">
                  <rect x="220" y="260" width="1306" height="924" fill="#fafaf8" />
                  <polygon v-for="(w, i) in woods" :key="'w' + i" :points="w" fill="#f5f7f5" />
                  <path v-for="(r, i) in roads" :key="'r' + i" :d="r" class="road" />
                  <polygon v-for="(w, i) in ponds" :key="'p' + i" :points="w" fill="#dbe0e2" />
                  <path v-for="(r, i) in rivers" :key="'v' + i" :d="r" class="river" />
                  <polygon v-for="(w, i) in water" :key="'l' + i" :points="w" fill="#d4dadc" stroke="#d4dadc" stroke-linejoin="round" />
                  <path v-for="(r, i) in regions" :key="'g' + i" :d="r" class="region" />
                  <path v-for="(r, i) in borders" :key="'h' + i" :d="r" class="halo" />
                  <path v-for="(r, i) in borders" :key="'b' + i" :d="r" class="border" />
                  <g v-for="p in places" :key="p[0] + p[1]" class="place" :class="{ land: p[5] === 11 }">
                    <text :x="p[1]" :y="p[2] + p[5] * 0.35" :font-size="p[5]" :textLength="p[3]" lengthAdjust="spacingAndGlyphs">{{ p[0] }}</text>
                    <rect v-if="p[4]" :x="p[4] - 2" :y="p[2] - 1.5" width="4" height="2.500" />
                  </g>
                  <g v-for="c in cities" :key="c[0]">
                    <circle :cx="c[4]" :cy="c[5]" :r="c[6]" :fill="c[7] ? '#e31a1c' : '#fb9a99'" stroke="#2a2a2a" />
                    <text class="city" :x="c[1]" :y="c[2]" :textLength="c[3]" lengthAdjust="spacingAndGlyphs">{{ c[0] }}</text>
                  </g>
                  <text class="label" x="783" y="299" textLength="118" lengthAdjust="spacingAndGlyphs">Random places</text>
                  <rect x="592.500" y="284.500" width="500" height="101" fill="none" stroke="#3a8fc8" />
                  <rect x="592.500" y="284.500" width="500" height="101" fill="none" stroke="#5a0030" stroke-dasharray="4 2" />
                  <rect v-for="(h, i) in handles" :key="i" :x="h[0]" :y="h[1]" width="10" height="10" fill="#fff" stroke="#3d8fc9" />
                </svg>
              </div>
            </div>
          </div>
        </main>

        <div class="split"><i></i></div>

        <aside class="panel">
          <div class="tabs"><span class="on" style="width: 60px">Items</span><span style="width: 107px">Undo History</span></div>
          <div class="dock"><span>Items</span><svg width="30" height="14" viewBox="0 0 30 14"><g fill="none" stroke="#8a8a8a"><rect x="2.500" y="2.500" width="10" height="9" /><path d="M5.500 8V5h5v5H8M4.500 6.500h4v4h-4z" /><rect x="16.500" y="2.500" width="10" height="9" /><path d="M18.500 4l6 6M24.500 4l-6 6" stroke-width="1.400" /></g></svg></div>
          <div class="tree">
            <div class="head"><span class="c1"><svg width="16" height="12" viewBox="0 0 16 12"><path d="M1 6.500Q8-.5 15 6.500 8 12 1 6.500z" fill="#eee" /><circle cx="8" cy="6.500" r="3" fill="#333" /><circle cx="7" cy="5.500" r="1" fill="#fff" /><path d="M1 3.500Q8-1.500 15 3.500" fill="none" stroke="#999" /></svg></span><span class="c2"><svg width="14" height="15" viewBox="0 0 14 15"><path d="M3.500 8V5.500q0-4 3.500-4t3.500 4V8" fill="none" stroke="#e0e0e0" stroke-width="2" /><rect x="1" y="7" width="12" height="7.500" rx="1" fill="#707070" /></svg></span><span class="c3">Item</span></div>
            <div v-for="r in [['Random places', 1], ['Map 1', 0]]" :key="r[0]" class="row" :class="{ bold: r[1] }">
              <i class="chk"><svg width="12" height="12"><path d="M3 6l2.500 3.500L10 2.500" fill="none" stroke="#8f8f8f" stroke-width="1.600" /></svg></i><i class="chk second"></i>
              <svg v-if="r[1]" class="pic" width="14" height="12" viewBox="0 0 14 12"><rect x=".5" y=".5" width="13" height="11" fill="#eee" stroke="#bbb" /><text x="7" y="10" text-anchor="middle" font-family="Liberation Serif,serif" font-weight="700" font-size="10.500" fill="#333">T</text></svg>
              <svg v-else class="pic" width="14" height="12" viewBox="0 0 14 12"><rect x=".5" y=".5" width="13" height="11" fill="#ccc" stroke="#bbb" /><path d="M1 0h2v9l2 3H1z" fill="#eee" /></svg>
              <span>{{ r[0] }}</span>
            </div>
          </div>
          <div class="hsplit"><i></i></div>
          <div class="tabs two"><span style="width: 68px">Layout</span><span class="on" style="width: 124px">Item Properties</span><span style="width: 68px">Guides</span></div>
          <div class="dock low"><span>Item Properties</span><svg width="30" height="14" viewBox="0 0 30 14"><g fill="none" stroke="#8a8a8a"><rect x="2.500" y="2.500" width="10" height="9" /><path d="M5.500 8V5h5v5H8M4.500 6.500h4v4h-4z" /><rect x="16.500" y="2.500" width="10" height="9" /><path d="M18.500 4l6 6M24.500 4l-6 6" stroke-width="1.400" /></g></svg></div>
          <div class="kind">Label</div>
          <div class="scroll">
            <div class="form">
              <h4 class="one"><svg width="12" height="12"><path d="M1 3h9l-4.500 5z" /></svg>Main Properties</h4>
              <section class="box main">
                <div class="area">Random places</div>
                <div class="check"><i></i>Render as HTML</div>
                <div class="btn">Insert an Expression...</div>
              </section>
              <h4 class="two"><svg width="12" height="12"><path d="M1 3h9l-4.500 5z" /></svg>Appearance</h4>
              <section class="box look">
                <div class="line font"><div class="btn">Font</div><div class="drop"><em></em></div></div>
                <div class="line color"><span>Font color</span><div class="btn"><i></i></div><div class="drop"><em></em></div></div>
                <div class="line spin"><span>Horizontal margin</span><div><p>0.00 mm</p><s><em class="up"></em><em></em></s></div></div>
                <div class="line spin"><span>Vertical margin</span><div><p>0.00 mm</p><s><em class="up"></em><em></em></s></div></div>
                <div class="cap">Horizontal alignment</div>
                <div class="radios"><label style="width: 56.500px"><i></i>Left</label><label style="width: 76px"><i class="on"></i>Center</label><label style="width: 66px"><i></i>Right</label><label><i></i>Justify</label></div>
                <div class="cap v">Vertical alignment</div>
                <div class="radios"><label style="width: 56.500px"><i class="on"></i>Top</label><label style="width: 74px"><i></i>Middle</label><label><i></i>Bottom</label></div>
              </section>
              <h4 class="fold tall"><svg width="12" height="12"><path d="M3 1.500v9l5.500-4.500z" /></svg>Position and Size</h4>
              <h4 class="fold"><svg width="12" height="12"><path d="M3 1.500v9l5.500-4.500z" /></svg>Rotation</h4>
              <h4 class="fold tick"><svg width="12" height="12"><path d="M3 1.500v9l5.500-4.500z" /></svg><i></i>Frame</h4>
              <h4 class="fold tick"><svg width="12" height="12"><path d="M3 1.500v9l5.500-4.500z" /></svg><i></i>Background</h4>
              <h4 class="fold"><svg width="12" height="12"><path d="M3 1.500v9l5.500-4.500z" /></svg>Item ID</h4>
            </div>
            <div class="sbar"><b><em class="up"></em></b><i></i><u></u><b><em></em></b></div>
          </div>
        </aside>
      </div>
      <footer></footer>
    </div>

    <div class="dialog">
      <div class="dhead"><div class="dbtn">Cancel</div><strong>Text Format</strong><div class="dbtn go">Select</div></div>
      <div class="dbody">
        <div class="search"><svg width="16" height="16" viewBox="0 0 16 16"><circle cx="6.500" cy="6.500" r="4.700" fill="none" stroke="#a5a5a5" stroke-width="2" /><path d="M10 10l4.500 4.500" stroke="#a5a5a5" stroke-width="2.500" /></svg><span>ubun</span><svg width="16" height="12" viewBox="0 0 16 12"><path d="M0 6l5-6h11v12H5z" fill="#b0b0b0" /><path d="M7.500 3.500l5 5M12.500 3.500l-5 5" stroke="#222" stroke-width="2" /></svg></div>
        <div class="list">
          <div v-for="f in fonts" :key="f.t" class="frow" :class="f.cls"><svg width="397" height="53"><text :x="f.x" :y="f.y" :textLength="f.w" lengthAdjust="spacingAndGlyphs">{{ f.t }}</text></svg></div>
        </div>
        <div class="preview"><svg width="383" height="46"><text x="0" y="38" textLength="329" lengthAdjust="spacingAndGlyphs">The quick brown fox</text><text x="341" y="38" textLength="104" lengthAdjust="spacingAndGlyphs">jumps</text></svg></div>
        <div class="size">
          <span>Size</span>
          <svg width="212" height="34" viewBox="0 0 212 34"><rect x=".5" y="15.500" width="206" height="3" rx="1.500" fill="#262626" stroke="#1c1c1c" /><rect x=".5" y="15.500" width="74" height="3" fill="#6dc8d6" stroke="#34929f" /><path v-for="t in sizeTicks" :key="t" :d="`M${t} 25v7`" stroke="#8a8a8a" /><path d="M67 24.500Q65 20 65 16a10 10 0 0 1 20 0q0 4-2.500 8.500L75 31z" fill="#6ac7d6" /></svg>
          <div class="num"><span>30</span><svg width="50" height="12" viewBox="0 0 50 12"><path d="M1 6.500h10M36 6.500h10M41 1.500v10" stroke="#ddd" stroke-width="1.800" /></svg></div>
        </div>
      </div>
    </div>

    <svg class="marks" width="2053" height="1256" viewBox="0 0 2053 1256">
      <g fill="none" stroke="#800000" stroke-width="4.600" stroke-linejoin="round">
        <rect x="8" y="634.500" width="66" height="59.500" rx="1" /><rect x="1725" y="501" width="141" height="55" rx="1" /><rect x="1675.500" y="596" width="163" height="67.500" rx="1" /><rect x="1689" y="879" width="345" height="236" rx="1" />
        <path d="M1440 767l252 134" />
      </g>
      <path d="M1420 756.300l29.500 4.200-10.500 17z" fill="#800000" />
    </svg>
  </div>
</template>

<style>
body { margin: 0; background: #353535; }
</style>

<style scoped>
.desk { position: relative; display: flex; width: 2053px; height: 1256px; overflow: hidden; background: #353535; color: #8e8e8e; font: 13px/16px "DejaVu Sans", sans-serif; }
.desk b:not(.x) { font-weight: 400; }
.edge { width: 4px; border-right: 1px solid #8d8f90; background: #d9dbdb; }
.edge i { display: block; margin-top: 973px; height: 102px; background: #b4bcc1; }
.win { flex: 1; display: flex; flex-direction: column; min-width: 0; }
.title { height: 23px; border-bottom: 1px solid #222; display: flex; justify-content: center; position: relative; }
.title text { font: 700 13.500px "Open Sans", sans-serif; fill: #fff; }
.title .x { position: absolute; right: 13px; top: 0; }
.menu { height: 22px; display: flex; align-items: center; padding-left: 10px; border-bottom: 1px solid #757575; }
.menu span { white-space: nowrap; }
.menu u { text-underline-offset: 3px; }
.bar { display: flex; align-items: center; border-bottom: 1px solid #757575; background: linear-gradient(#383838, #343434 90%, #2b2b2b); }
.bar.first { height: 62px; }
.bar.second { height: 61px; }
.cell { width: 57px; height: 50px; flex: none; display: flex; justify-content: center; }
.sep { width: 1px; height: 42px; margin: 0 3.5px; background: #2a2a2a; }
.sep + .cell + .sep { margin: 0 3.500px 0 1px; }
.grip { flex: none; width: 5px; height: 17px; margin: 0 2.500px 0 5px; background-image: radial-gradient(circle, #a0a0a0 0.9px, transparent 1.100px); background-size: 2.500px 3px; }
.grip.mid { margin: 0 3px 0 7.500px; }
.grip.flat { width: 18px; height: 6px; margin: 5px auto 1px 25px; display: block; background-size: 3px 3px; }
.combo { width: 82px; height: 28px; margin: -2px 1px 0 0.500px; border: 1px solid #252525; border-radius: 3px; background: #2e2e2e; display: flex; justify-content: space-between; align-items: center; }
.combo span { padding-left: 4px; }
.combo em { width: 18px; height: 26px; border: 1px solid #505050; background: #383838; border-radius: 0 3px 3px 0; display: flex; align-items: center; justify-content: center; }
.combo em::before { content: ""; }
.combo em::before, .drop em, .spin em, .sbar em { display: block; border: 4px solid transparent; border-top-color: #777; border-bottom: 0; }
em.up { border-top: 0 !important; border-bottom: 4px solid #777 !important; }

.body { height: 1079px; display: flex; }
.tools { width: 63px; border-right: 1px solid #262626; }
.tools b { display: flex; align-items: center; width: 50px; height: 54px; margin: 0 0 0 4px; padding-left: 3px; border: 1px solid transparent; border-radius: 3px; }
.tools b svg { margin-top: 2px; }
.tools b.on { border-color: #555; background: #303030; }
.view { width: 1588px; }
.ruler { display: block; background: #343434; flex: none; }
.ruler path { stroke: #7b7b7b; }
.ruler path.red { stroke: #e00000; }
.ruler text { font: 11px "DejaVu Sans", sans-serif; fill: #747474; }
.work { display: flex; height: 1058px; }
.canvas { flex: 1; background: #d7d7d7; padding: 67px 0 0 130px; }
.page { width: 1306px; height: 924px; background: #fff; box-shadow: 9px 8px 0 #959595; }
.page svg { display: block; }
.road { fill: none; stroke: #eeeeed; stroke-width: 1; }
.river { fill: none; stroke: #dbe0e5; stroke-width: 1.500; }
.region { fill: none; stroke: #efd4d8; stroke-width: 1.200; stroke-dasharray: 3 2; }
.halo { fill: none; stroke: #f3e6e8; stroke-width: 6; opacity: 0.4; }
.border { fill: none; stroke: #eed7db; stroke-width: 1.500; stroke-linejoin: round; }
.place { fill: #95a3b1; font-family: Inter, "Open Sans", sans-serif; font-weight: 700; }
.place text { paint-order: stroke; stroke: #fafaf8; stroke-width: 1.500px; }
.place.land { fill: #b3bdc6; font-weight: 600; }
.city { font: 18.500px "Noto Sans", sans-serif; fill: #000; paint-order: stroke; stroke: #fff; stroke-width: 3px; stroke-linejoin: round; }
.label { font: 15.500px "DejaVu Sans", sans-serif; fill: #111; }

.split { width: 6px; display: flex; align-items: center; }
.split i { width: 2px; height: 14px; margin: 5px 0 0 3px; background: repeating-linear-gradient(#808080 0 1px, transparent 1px 3px); }
.panel { width: 390px; display: flex; flex-direction: column; }
.tabs { height: 27px; display: flex; align-items: flex-end; padding: 0 0 1px 1px; background: linear-gradient(#484848, #484848) 0 100% / 100% 1px no-repeat; flex: none; }
.tabs span { box-sizing: border-box; height: 24px; line-height: 23px; margin-right: 1px; padding-right: 1px; text-align: center; border: 1px solid #4a4a4a; border-bottom: 0; border-radius: 3px 3px 0 0; box-shadow: 0 0 0 1px #292929; background: #303030; clip-path: inset(-1px -1px 0 -1px); }
.tabs span.on { height: 27px; background: #363636; margin-bottom: -1px; padding-right: 2px; }
.tabs.two span { line-height: 22px; padding-right: 2px; }
.tabs.two span.on { line-height: 23px; }
.dock { height: 21px; flex: none; display: flex; justify-content: space-between; align-items: center; padding-left: 4px; }
.dock svg { margin-right: -1px; }
.dock.low { height: 20px; }
.tree { height: 287px; border: 1px solid #262626; background: #2f2f2f; flex: none; }
.head { display: flex; height: 19px; background: linear-gradient(#434343, #363636); border-bottom: 1px solid #262626; line-height: 18px; margin-bottom: -1px; }
.head span { display: flex; align-items: center; }
.c1 { width: 22px; padding-left: 2px; padding-right: 5px; border-right: 1px solid #555; }
.c2 { width: 23px; padding-left: 4px; padding-right: 3px; border-right: 1px solid #555; }
.c3 { padding-left: 3px; }
.row { display: flex; align-items: center; height: 19px; }
.row.bold { font-weight: 700; }
.chk { width: 12px; height: 12px; border: 1px solid #282828; margin-left: 3px; display: flex; }
.chk.second { margin-left: 17px; }
.pic { margin: 0 7px 0 18px; }
.hsplit { height: 7px; flex: none; }
.hsplit i { display: block; width: 14px; height: 2px; margin: 3px 0 0 188px; background: repeating-linear-gradient(90deg, #808080 0 2px, transparent 2px 3px); }
.kind { height: 21px; flex: none; background: #c8c8c8; color: #969696; font-weight: 700; line-height: 20px; padding-left: 6px; }
.scroll { flex: 1; min-height: 0; display: flex; border-left: 1px solid #262626; }
.form { width: 375px; overflow: hidden; padding-left: 12px; box-sizing: border-box; }
h4 { margin: 0; font-size: 13px; line-height: 16px; display: flex; align-items: center; box-sizing: border-box; }
h4 svg { margin: 0 7px 0 2px; fill: none; stroke: #111; stroke-width: 1.200; }
h4.one { height: 32px; padding-top: 9px; }
h4.two { height: 27px; padding-top: 5px; }
h4.fold { height: 24px; }
h4.tall { height: 34px; }
h4.tick svg { margin-right: 4px; }
h4 i { width: 12px; height: 12px; border: 1px solid #262626; background: #323232; margin-right: 9px; }
.box { width: 351px; box-sizing: border-box; border: 1px solid #404040; border-radius: 2px; padding: 12px 0 0 12px; }
.main { height: 237px; }
.look { height: 251px; padding-top: 13px; }
.area { width: 318px; height: 143px; padding: 5px 0 0 4px; border: 1px solid #262626; background: #2f2f2f; color: #dcdcdc; }
.check { display: flex; align-items: center; height: 14px; margin-top: 10px; }
.check i { width: 12px; height: 12px; border: 1px solid #262626; background: #323232; margin-right: 6px; }
.btn, .drop { box-sizing: border-box; border: 1px solid #525252; border-radius: 3px; box-shadow: 0 0 0 1px #282828; background: linear-gradient(#484848, #393939); }
.main .btn { width: 322px; height: 23px; margin: 12px 0 0 1px; text-align: center; line-height: 21px; letter-spacing: 0.1px; }
.line { display: flex; align-items: center; }
.drop { width: 10px; display: flex; justify-content: center; align-items: center; }
.drop em { border-width: 4px 4px 0; }
.font { height: 21px; }
.font .btn { width: 310px; height: 21px; margin: 0 2px 0 1px; padding-left: 5px; line-height: 19px; color: #0c0c0c; }
.font .drop { height: 21px; }
.color { height: 26px; margin-top: 8px; }
.line > span { width: 123px; white-space: nowrap; }
.color .btn { width: 106px; height: 26px; padding: 4px 3px; margin: 0 2px 0 1px; }
.color .btn i { display: block; height: 16px; border-radius: 3px; background: #000; }
.color .drop { height: 26px; }
.spin { height: 24px; margin-top: 8px; }
.spin > div { display: flex; justify-content: space-between; box-sizing: border-box; width: 201px; height: 24px; border: 1px solid #262626; border-radius: 3px; background: #2f2f2f; }
.spin p { margin: 0 0 0 4px; line-height: 22px; }
.spin s { width: 11px; border: 1px solid #4e4e4e; background: #3c3c3c; display: flex; flex-direction: column; align-items: center; justify-content: center; gap: 4px; }
.cap { height: 16px; margin-top: 7px; }
.cap.v { margin-top: 10px; }
.radios { display: flex; height: 16px; margin-top: 10px; }
.radios label { display: flex; align-items: center; }
.radios i { width: 12px; height: 12px; border: 1px solid #282828; border-radius: 50%; margin-right: 6px; background: #313131; }
.radios i.on { background: radial-gradient(circle, #8a8a8a 3px, #303030 3.600px); }
.sbar { width: 14px; display: flex; flex-direction: column; background: #2f2f2f; border-left: 1px solid #262626; }
.sbar b { height: 13px; flex: none; border: 1px solid #505050; display: flex; align-items: center; justify-content: center; background: #393939; }
.sbar i { height: 400px; border: 1px solid #505050; background: #404040; }
.sbar u { flex: 1; }
footer { height: 4px; border-top: 1px solid #202020; }

.dialog { position: absolute; left: 982px; top: 638px; width: 423px; height: 507px; border: 1px solid #666; border-top-color: #777; border-radius: 5px 5px 0 0; background: #2e2e2e; box-shadow: 0 6px 16px rgba(0, 0, 0, 0.5), 0 0 4px rgba(0, 0, 0, 0.35); font: 14px/18px "Noto Sans", sans-serif; color: #c8c8c8; }
.dhead { height: 45px; border-bottom: 1px solid #222; border-radius: 4px 4px 0 0; background: linear-gradient(#393939, #333); display: flex; align-items: center; justify-content: space-between; padding: 0 5.500px 0 6px; }
.dhead strong { color: #fff; font-size: 13px; font-family: "Open Sans", sans-serif; letter-spacing: -0.45px; margin-top: -2px; }
.dbtn { width: 71px; height: 32px; border: 1px solid #232323; border-bottom-color: #0e0e0e; border-radius: 4px; background: #3e3e3e; line-height: 30px; text-align: center; font-size: 13px; letter-spacing: -0.3px; color: #d5d5d5; }
.dbtn.go { background: #8fd0b0; border-color: #56c190; color: #111; }
.dbody { padding: 13px 11.500px 0 12px; }
.search { height: 31px; border: 1px solid #1e1e1e; border-radius: 4px; background: #262626; display: flex; align-items: center; padding: 0 8px; }
.search span { flex: 1; padding-left: 6px; color: #a9a9a9; font-size: 13.500px; }
.list { height: 302px; margin-top: 6px; border: 1px solid #212121; background: #262626; overflow: hidden; box-sizing: border-box; }
.frow { height: 53px; }
.frow svg { display: block; }
.frow.sel { height: 38px; background: #94ecec; display: flex; align-items: flex-end; }
.frow.sel svg { overflow: hidden; }
.frow text { fill: #cbcbcb; }
.frow.sel text { fill: #000; }
.cond text { font: 700 26px "Noto Sans", sans-serif; }
.mono text { font: 20px "DejaVu Sans Mono", monospace; }
.mono.b text { font-weight: 700; }
.it text { font-style: italic; }
.preview { height: 45px; margin-top: 7px; border: 1px solid #1e1e1e; border-radius: 4px; background: #262626; padding: 0 8px; display: flex; }
.preview text { font: 700 40px "Noto Sans", sans-serif; fill: #c9c9c9; }
.size { display: flex; align-items: center; margin-top: 6.500px; height: 34px; }
.size > span { width: 41px; font-size: 13px; }
.num { box-sizing: border-box; width: 133px; height: 34px; margin-left: auto; border: 1px solid #1e1e1e; border-radius: 4px; background: #262626; display: flex; align-items: center; justify-content: space-between; padding: 0 8px; font-size: 13px; }
.marks { position: absolute; left: 0; top: 0; pointer-events: none; }
</style>
